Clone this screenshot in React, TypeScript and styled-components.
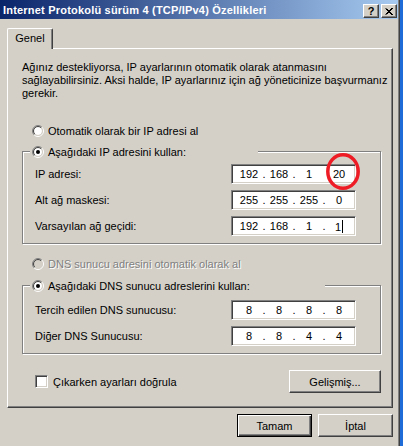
import React from "react";
import styled, { createGlobalStyle } from "styled-components";

const GlobalStyle = createGlobalStyle`
  html, body {
    margin: 0;
    padding: 0;
    background: #1f6bd8;
  }
  body {
    font-family: "Liberation Sans", Arial, sans-serif;
    font-size: 11px;
    color: #000;
  }
`;

const Window = styled.div`
  width: 400px;
  height: 446px;
  box-sizing: border-box;
  border-right: 1px solid #404040;
  background: #d4d0c8;
  overflow: hidden;
`;

const Frame = styled.div`
  height: 100%;
  border-right: 1px solid #808080;
  display: flex;
  flex-direction: column;
`;

const TitleBar = styled.div`
  height: 19px;
  flex: none;
  display: flex;
  align-items: center;
  justify-content: space-between;
  padding: 0 1px 0 3px;
  background: linear-gradient(to right, #0a246a, #a6caf0);
`;

const TitleText = styled.span`
  color: #fff;
  font-weight: bold;
  font-size: 11px;
  letter-spacing: 0.2px;
  white-space: nowrap;
`;

const CaptionButtons = styled.div`
  display: flex;
  gap: 2px;
  margin-top: 3px;
`;

const CaptionButton = styled.div`
  width: 16px;
  height: 14px;
  box-sizing: border-box;
  display: flex;
  align-items: center;
  justify-content: center;
  background: #d4d0c8;
  border: 1px solid;
  border-color: #fff #404040 #404040 #fff;
  box-shadow: inset -1px -1px 0 #808080;
  font-weight: bold;
  font-size: 11px;
  line-height: 1;
`;

const TabStrip = styled.div`
  display: flex;
  margin: 9px 0 0 7px;
`;

const Tab = styled.div`
  position: relative;
  z-index: 1;
  width: 46px;
  height: 21px;
  box-sizing: border-box;
  margin-bottom: -1px;
  border-top: 1px solid #fff;
  border-left: 1px solid #fff;
  border-right: 1px solid #404040;
  border-radius: 2px 2px 0 0;
  box-shadow: inset -1px 0 0 #808080;
  background: #d4d0c8;
  display: flex;
  align-items: center;
  justify-content: center;
  padding-bottom: 2px;
`;

const Panel = styled.div`
  height: 360px;
  box-sizing: border-box;
  margin: 0 5px 0 7px;
  padding: 12px 10px 0 14px;
  border-top: 1px solid #fff;
  border-left: 1px solid #fff;
  border-right: 1px solid #404040;
  border-bottom: 1px solid #404040;
  box-shadow: inset -1px -1px 0 #808080;
  display: flex;
  flex-direction: column;
`;

const Intro = styled.p`
  margin: 0;
  line-height: 13px;
  white-space: nowrap;
`;

const RadioRow = styled.label<{ $disabled?: boolean; $top?: number }>`
  display: flex;
  align-items: center;
  gap: 4px;
  height: 13px;
  margin: ${(p) => p.$top ?? 0}px 0 0 10px;
  color: ${(p) => (p.$disabled ? "#808080" : "#000")};
  text-shadow: ${(p) => (p.$disabled ? "1px 1px 0 #fff" : "none")};
`;

const Group = styled.fieldset<{ $top: number; $padTop: number }>`
  margin: ${(p) => p.$top}px 1px 0 0;
  padding: ${(p) => p.$padTop}px 24px 7px 12px;
  min-inline-size: 0;
  border: 1px solid #808080;
  box-shadow: 1px 1px 0 #fff, inset 1px 1px 0 #fff;
  display: flex;
  flex-direction: column;
  gap: 6px;
`;

const Legend = styled.legend<{ $width: number }>`
  width: ${(p) => p.$width}px;
  box-sizing: border-box;
  margin-left: -5px;
  padding: 0 0 0 2px;
  height: 13px;
  background: #d4d0c8;
  display: flex;
  align-items: center;
  gap: 4px;
`;

const FieldRow = styled.div`
  display: flex;
  align-items: center;
  justify-content: space-between;
  height: 20px;
`;

const IpBox = styled.div`
  position: relative;
  width: 125px;
  height: 20px;
  box-sizing: border-box;
  border: 1px solid;
  border-color: #808080 #fff #fff #808080;
  box-shadow: inset 1px 1px 0 #404040, inset -1px -1px 0 #d4d0c8;
  background: #fff;
  display: flex;
  align-items: center;
  padding-left: 5px;
`;

const Octet = styled.span`
  width: 24px;
  text-align: center;
  white-space: nowrap;
`;

const Dot = styled.span`
  width: 6px;
  text-align: center;
`;

const Caret = styled.span`
  display: inline-block;
  width: 1px;
  height: 13px;
  margin-left: 1px;
  vertical-align: -2px;
  background: #000;
`;

const Highlight = styled.svg`
  position: absolute;
  left: 91px;
  top: -15px;
  pointer-events: none;
`;

const OptionsRow = styled.div`
  display: flex;
  align-items: center;
  justify-content: space-between;
  margin: 16px 1px 0 13px;
`;

const CheckLabel = styled.label`
  display: flex;
  align-items: center;
  gap: 5px;
`;

const CheckBox = styled.span`
  width: 13px;
  height: 13px;
  box-sizing: border-box;
  border: 1px solid;
  border-color: #808080 #fff #fff #808080;
  box-shadow: inset 1px 1px 0 #404040, inset -1px -1px 0 #d4d0c8;
  background: #fff;
`;

const Button = styled.button<{ $width: number; $default?: boolean }>`
  width: ${(p) => p.$width}px;
  height: 23px;
  box-sizing: border-box;
  padding: 0;
  font-family: inherit;
  font-size: 11px;
  color: #000;
  background: #d4d0c8;
  border: 1px solid;
  border-color: ${(p) => (p.$default ? "#000" : "#fff #404040 #404040 #fff")};
  box-shadow: ${(p) =>
    p.$default
      ? "inset 1px 1px 0 #fff, inset -1px -1px 0 #404040, inset -2px -2px 0 #808080"
      : "inset -1px -1px 0 #808080"};
`;

const Footer = styled.div`
  display: flex;
  justify-content: flex-end;
  gap: 6px;
  margin: 6px 5px 0 0;
`;

function Radio({ checked, disabled }: { checked?: boolean; disabled?: boolean }) {
  const arc = (r: number) => {
    const d = r / Math.SQRT2;
    return {
      tl: `M${6 - d} ${6 + d} A${r} ${r} 0 0 1 ${6 + d} ${6 - d}`,
      br: `M${6 + d} ${6 - d} A${r} ${r} 0 0 1 ${6 - d} ${6 + d}`,
    };
  };
  const o = arc(5.5);
  const i = arc(4.5);
  return (
    <svg width="12" height="12" viewBox="0 0 12 12" style={{ flex: "none" }}>
      <circle cx="6" cy="6" r="4" fill={disabled ? "#d4d0c8" : "#fff"} />
      <path d={o.tl} stroke="#808080" fill="none" />
      <path d={o.br} stroke="#fff" fill="none" />
      <path d={i.tl} stroke="#404040" fill="none" />
      <path d={i.br} stroke="#d4d0c8" fill="none" />
      {checked && <circle cx="6" cy="6" r="2" fill="#000" />}
    </svg>
  );
}

function IpField({ value, caret, marked }: { value: string[]; caret?: boolean; marked?: boolean }) {
  return (
    <IpBox>
      {value.map((v, n) => (
        <React.Fragment key={n}>
          <Octet>
            {v}
            {caret && n === 3 && <Caret />}
          </Octet>
          {n < 3 && <Dot>{marked && n === 2 ? "" : "."}</Dot>}
        </React.Fragment>
      ))}
      {marked && (
        <Highlight width="40" height="42" viewBox="0 0 40 42">
          <ellipse cx="20" cy="21.5" rx="15.2" ry="16.8" fill="none" stroke="#ee1c25" strokeWidth="3.5" />
        </Highlight>
      )}
    </IpBox>
  );
}

export default function App() {
  return (
    <>
      <GlobalStyle />
      <Window>
        <Frame>
          <TitleBar>
            <TitleText>Internet Protokolü sürüm 4 (TCP/IPv4) Özellikleri</TitleText>
            <CaptionButtons>
              <CaptionButton>?</CaptionButton>
              <CaptionButton>
                <svg width="8" height="7" viewBox="0 0 8 7">
                  <path d="M0.5 0.5 L7 7 M1.5 0.5 L8 7 M7 0 L0.5 6.5 M8 0 L1.5 6.5" stroke="#000" strokeWidth="1" />
                </svg>
              </CaptionButton>
            </CaptionButtons>
          </TitleBar>

          <TabStrip>
            <Tab>Genel</Tab>
          </TabStrip>

          <Panel>
            <Intro>
              Ağınız destekliyorsa, IP ayarlarının otomatik olarak atanmasını
              <br />
              sağlayabilirsiniz. Aksi halde, IP ayarlarınız için ağ yöneticinize başvurmanız
              <br />
              gerekir.
            </Intro>

            <RadioRow $top={24}>
              <Radio />
              Otomatik olarak bir IP adresi al
            </RadioRow>

            <Group $top={8} $padTop={6}>
              <Legend $width={228}>
                <Radio checked />
                Aşağıdaki IP adresini kullan:
              </Legend>
              <FieldRow>
                IP adresi:
                <IpField value={["192", "168", "1", "20"]} marked />
              </FieldRow>
              <FieldRow>
                Alt ağ maskesi:
                <IpField value={["255", "255", "255", "0"]} />
              </FieldRow>
              <FieldRow>
                Varsayılan ağ geçidi:
                <IpField value={["192", "168", "1", "1"]} caret />
              </FieldRow>
            </Group>

            <RadioRow $top={13} $disabled>
              <Radio disabled />
              DNS sunucu adresini otomatik olarak al
            </RadioRow>

            <Group $top={9} $padTop={8}>
              <Legend $width={295}>
                <Radio checked />
                Aşağıdaki DNS sunucu adreslerini kullan:
              </Legend>
              <FieldRow>
                Tercih edilen DNS sunucusu:
                <IpField value={["8", "8", "8", "8"]} />
              </FieldRow>
              <FieldRow>
                Diğer DNS Sunucusu:
                <IpField value={["8", "8", "4", "4"]} />
              </FieldRow>
            </Group>

            <OptionsRow>
              <CheckLabel>
                <CheckBox />
                Çıkarken ayarları doğrula
              </CheckLabel>
              <Button $width={92}>Gelişmiş...</Button>
            </OptionsRow>
          </Panel>

          <Footer>
            <Button $width={75} $default>
              Tamam
            </Button>
            <Button $width={75}>İptal</Button>
          </Footer>
        </Frame>
      </Window>
    </>
  );
}
